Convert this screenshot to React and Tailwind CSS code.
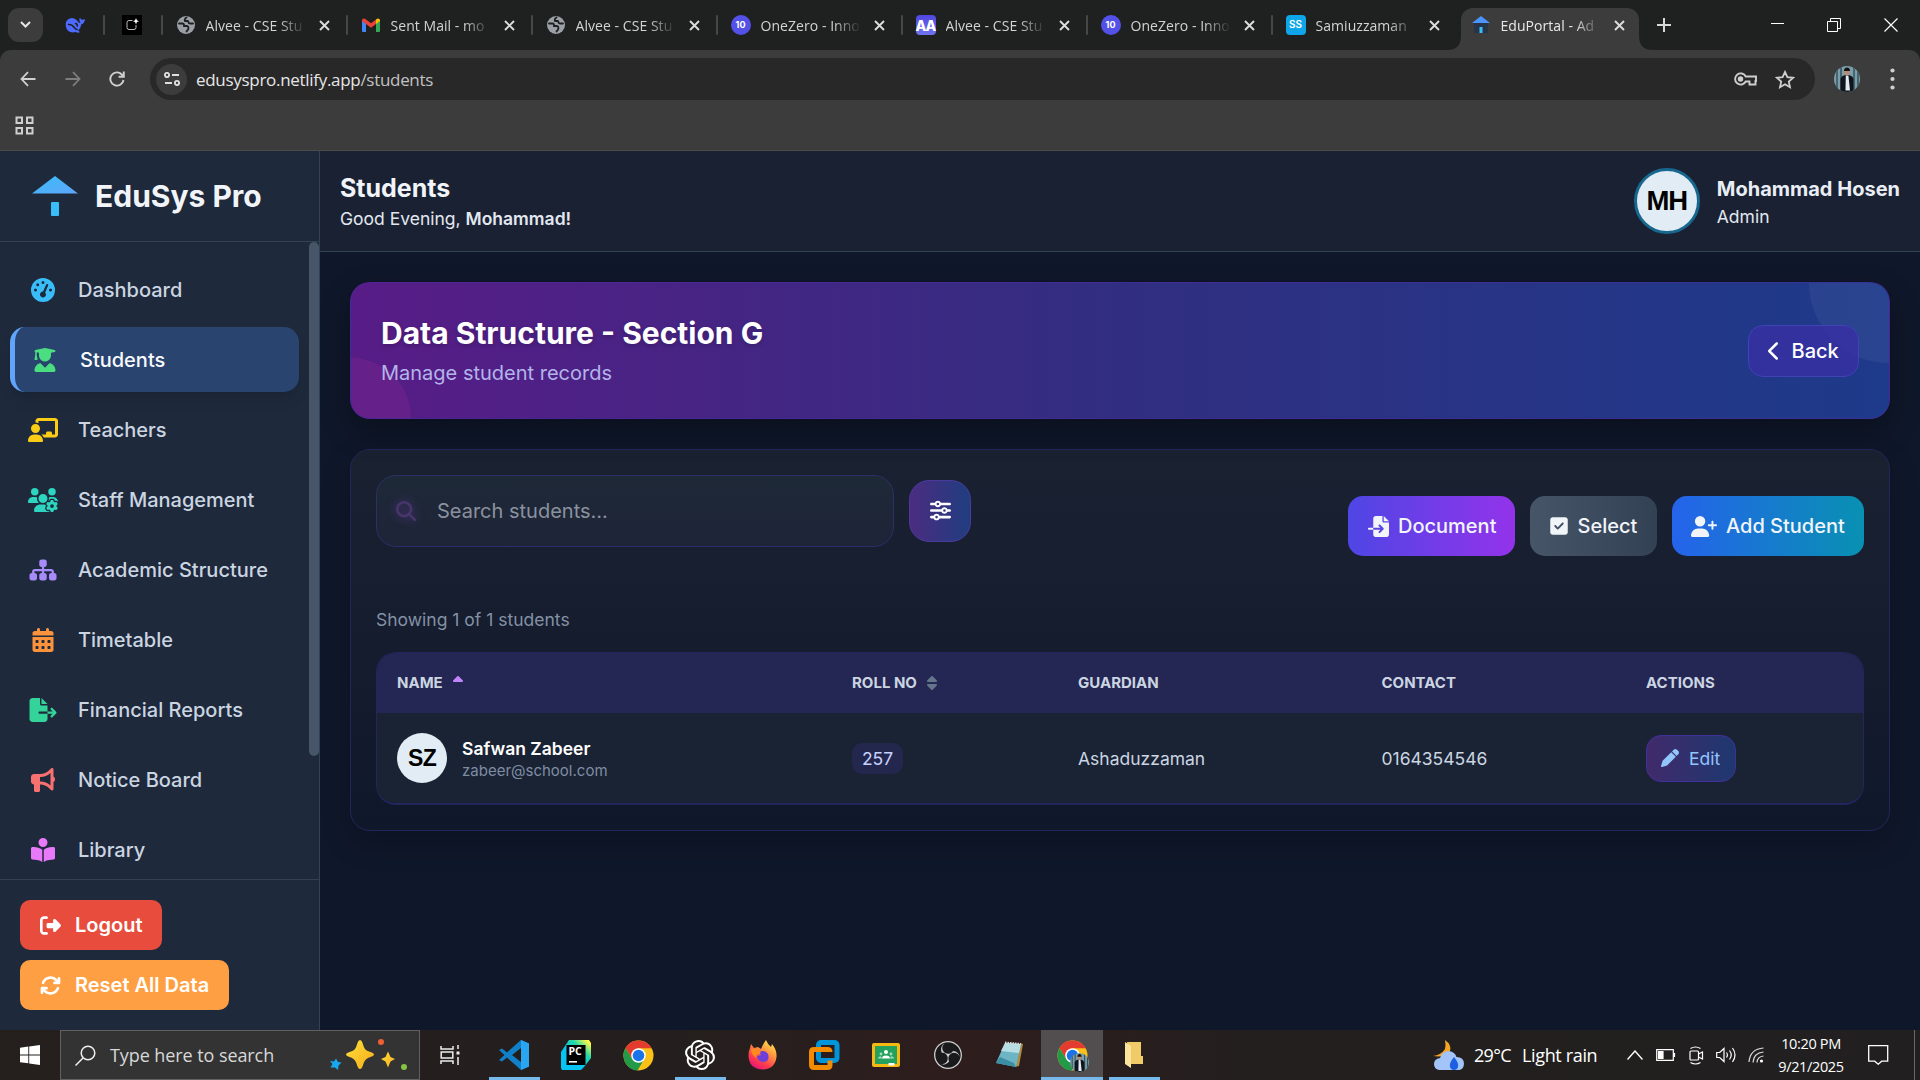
import React from "react";
import {
  FaGaugeHigh, FaUserGraduate, FaChalkboardUser, FaUsersGear, FaSitemap, FaCalendarDays,
  FaFileExport, FaBullhorn, FaBookOpenReader, FaRightFromBracket, FaArrowsRotate, FaChevronLeft,
  FaMagnifyingGlass, FaSliders, FaFileImport, FaSquareCheck, FaUserPlus, FaSort, FaSortUp, FaPen,
} from "react-icons/fa6";
import { SiOpenai, SiObsstudio } from "react-icons/si";

/* ---------- favicons ---------- */
const Globe = () => (
  <svg width="18" height="18" viewBox="0 0 18 18">
    <circle cx="9" cy="9" r="9" fill="#9aa0a6" />
    <path d="M2 7.500h3.500q1.500 0 1.500 1.500v1h3q1.500.3 1.500 2t-2 3.500M9.500 1.500Q7 3 8 5h2.500q1 0 1 1.300 0 1.200 1.500 1.200h3" stroke="#1f2020" strokeWidth="1.800" fill="none" strokeLinecap="round" />
  </svg>
);
const Gmail = () => (
  <svg width="18" height="14" viewBox="0 0 18 14">
    <path d="M0 2v11q0 1 1 1h3V5z" fill="#4285f4" />
    <path d="M18 2v11q0 1-1 1h-3V5z" fill="#34a853" />
    <path d="M14 1.500V6l4-3V2q-.6-2.400-3-1.200z" fill="#fbbc04" />
    <path d="M0 2q.6-2.400 3-1.200L9 5.200l5-3.700V6L9 9.800 0 3z" fill="#ea4335" />
  </svg>
);
const OneZero = () => (
  <div className="flex h-[20px] w-[20px] items-center justify-center rounded-full bg-[#5451e8] text-[9px] font-bold text-white">10</div>
);
const DoubleA = () => (
  <div className="flex h-[20px] w-[20px] items-center justify-center rounded-[4px] bg-[linear-gradient(#5046e0,#6f74ee)] text-[14px] font-extrabold tracking-[-1px] text-white">AA</div>
);
const DoubleS = () => (
  <div className="flex h-[20px] w-[20px] items-center justify-center rounded-[4px] bg-[#0ea5e9] pb-[1px] text-[10px] font-semibold text-white">SS</div>
);
const House = () => (
  <svg width="18" height="18" viewBox="0 0 18 18">
    <rect x="2" y="7" width="14" height="10" fill="#273347" />
    <path d="M9 0l9 7H0z" fill="#4a94fb" />
    <rect x="7.500" y="11" width="3" height="6" fill="#38bdf8" />
  </svg>
);

const tabs = [
  { icon: Globe, title: "Alvee - CSE Stu" },
  { icon: Gmail, title: "Sent Mail - mo" },
  { icon: Globe, title: "Alvee - CSE Stu" },
  { icon: OneZero, title: "OneZero - Inno" },
  { icon: DoubleA, title: "Alvee - CSE Stu" },
  { icon: OneZero, title: "OneZero - Inno" },
  { icon: DoubleS, title: "Samiuzzaman" },
];

const Cross = () => (
  <svg width="11" height="11" viewBox="0 0 11 11" stroke="#dcdddd" strokeWidth="1.900"><path d="M1 1l9 9M10 1l-9 9" /></svg>
);
const Sep = () => <div className="h-[20px] w-[2px] shrink-0 rounded bg-[#45484a]" />;

function TabBody({ Icon, title, active }) {
  return (
    <>
      <div className="flex w-[20px] shrink-0 justify-center"><Icon /></div>
      <div className={`ml-[10px] w-[98px] whitespace-nowrap font-['Open_Sans','Noto_Sans',sans-serif] text-[14px] tracking-[0.050px] [mask-image:linear-gradient(to_right,black_74%,transparent_102%)] ${active ? "text-[#e8e8e8]" : "text-[#d2d3d3]"}`}>{title}</div>
      <div className="ml-[15px]"><Cross /></div>
    </>
  );
}

function Portrait({ size }) {
  return (
    <svg width={size} height={size} viewBox="0 0 26 26">
      <defs><clipPath id={`pc${size}`}><circle cx="13" cy="13" r="13" /></clipPath></defs>
      <g clipPath={`url(#pc${size})`}>
        <rect width="26" height="26" fill="#7b9eab" />
        <path d="M3 0v26M7 0v26M20 0v26M24 0v26" stroke="#36505b" strokeWidth="1.500" />
        <path d="M6.500 26V13q1-4 6.500-4t6.500 4v13z" fill="#10151d" />
        <path d="M11.800 9.500h2.600l1.600 15h-4.500z" fill="#e4eaf2" />
        <ellipse cx="13" cy="6" rx="2.700" ry="3.600" fill="#b98b74" />
        <path d="M10 5q0-3.500 3-3.500T16 5z" fill="#17120f" />
      </g>
    </svg>
  );
}

function BrowserChrome() {
  return (
    <div className="flex h-[151px] shrink-0 flex-col border-b border-[#4b4b47] bg-[#1f2020]">
      <div className="flex h-[50px] shrink-0 items-center bg-[#1f2020]">
        <div className="ml-[8px] flex h-[34px] w-[35px] items-center justify-center rounded-[11px] bg-[#3c3c3c]">
          <svg width="11" height="8" viewBox="0 0 11 8" fill="none" stroke="#e6e6e6" strokeWidth="2"><path d="M1 1l4.500 4.500L10 1" /></svg>
        </div>
        <svg className="ml-[22px]" width="20" height="18" viewBox="0 0 20 18">
          <path d="M1 6q2-4 6.500-4 3 .3 5 3 1 2.200 3 2Q13.500 4 15 1.500q.5 2.200 2.300 2.200Q19 3.600 20 2.800q-.3 4.600-3.800 5.700-.3 3.600-3 6l1.800 1.800q-2.400.9-4.400-.3Q5 17.600 2.300 14 0 10.500 1 6z" fill="#4d6bfe" />
          <path d="M3.500 8.500q3.500-.2 5.500 2.700 1.500 2 3 2.300M10.500 7.500q2 .2 1.800 2.500" stroke="#1f2020" strokeWidth="1.500" fill="none" strokeLinecap="round" />
        </svg>
        <div className="ml-[18px]"><Sep /></div>
        <div className="ml-[17px] flex h-[20px] w-[20px] items-center justify-center bg-black">
          <svg width="14" height="14" viewBox="0 0 14 14"><path d="M7.500 2.500H4q-2 0-2 2v5q0 2 2 2h5q2 0 2-2V7" stroke="#bbb" fill="none" /><path d="M11 0l.9 2.300 2.100.9-2.100.9L11 6.500l-.9-2.400L8 3.200l2.100-.9z" fill="#fff" /></svg>
        </div>
        <div className="ml-[18.500px] flex">
          {tabs.map((t, i) => (
            <div key={i} className="flex h-[34px] w-[185px] items-center">
              <Sep />
              <div className="ml-[13px] flex items-center"><TabBody Icon={t.icon} title={t.title} /></div>
            </div>
          ))}
        </div>
        <div className="relative ml-[5px] mt-[8px] flex h-[42px] w-[178px] items-center rounded-t-[12px] bg-[#3c3c3c] pb-[8px] pl-[10px]">
          <svg className="absolute bottom-0 left-[-14px]" width="14" height="14"><path d="M14 0v14H0Q14 14 14 0z" fill="#3c3c3c" /></svg>
          <svg className="absolute bottom-0 right-[-14px]" width="14" height="14"><path d="M0 0v14h14Q0 14 0 0z" fill="#3c3c3c" /></svg>
          <TabBody Icon={House} title="EduPortal - Ad" active />
        </div>
        <svg className="ml-[18px]" width="14" height="14" viewBox="0 0 14 14" stroke="#d8d8d8" strokeWidth="2"><path d="M7 0v14M0 7h14" /></svg>
        <svg className="ml-[100px]" width="14" height="14" stroke="#fff" strokeWidth="1"><path d="M0 5.500h13" /></svg>
        <svg className="ml-[42px]" width="14" height="14" fill="none" stroke="#fff" strokeWidth="1"><path d="M.5 3.500h10v10H.5zM3.500 3.500v-3h10v10h-3" /></svg>
        <svg className="ml-[43px]" width="14" height="14" stroke="#fff" strokeWidth="1.200"><path d="M.5.500l13 13M13.500.500l-13 13" /></svg>
      </div>

      <div className="flex-1 rounded-t-[11px] bg-[#3c3c3c]">
        <div className="flex h-[58px] items-center">
          <svg className="ml-[20px]" width="16" height="16" viewBox="0 0 16 16" fill="none" stroke="#d0d0d0" strokeWidth="1.800"><path d="M15.500 8H1.500M8 1.200L1.500 8 8 14.800" /></svg>
          <svg className="ml-[29px]" width="16" height="16" viewBox="0 0 16 16" fill="none" stroke="#7d7d7d" strokeWidth="1.800"><path d="M.5 8h14M8 1.200L14.500 8 8 14.800" /></svg>
          <svg className="ml-[28px]" width="16" height="16" viewBox="0 0 16 16" fill="none" stroke="#d0d0d0" strokeWidth="1.900"><path d="M14.500 9A6.600 6.600 0 1 1 12.800 3.500L14.600 5.500M14.800.5v5.200H9.600" /></svg>
          <div className="ml-[25px] flex h-[42px] w-[1665px] items-center rounded-full bg-[#282828]">
            <div className="ml-[6px] flex h-[31px] w-[31px] items-center justify-center rounded-full bg-[#3c3c3c]">
              <svg width="16" height="14" viewBox="0 0 16 14" fill="none" stroke="#dedede" strokeWidth="1.900"><circle cx="3" cy="3" r="2.100" /><path d="M8 3h7M1 11h7" /><circle cx="13" cy="11" r="2.100" /></svg>
            </div>
            <div className="ml-[9px] mt-[1px] flex-1 whitespace-nowrap font-['Open_Sans','Noto_Sans',sans-serif] text-[17px] tracking-[-0.300px] text-[#e6e6e6]">edusyspro.netlify.app<span className="text-[#c2c2c2]">/students</span></div>
            <svg width="23" height="14" viewBox="0 0 23 14" fill="none" stroke="#cfcfcf" strokeWidth="1.900"><path d="M11.700 4.500A5.600 5.600 0 1 0 11.700 9.500H15.500V12.500H21.500V9H22V4.500z" /><circle cx="6.500" cy="7" r="1.800" fill="#cfcfcf" /></svg>
            <svg className="ml-[18px] mr-[20px]" width="20" height="19" viewBox="0 0 20 19" fill="none" stroke="#cfcfcf" strokeWidth="1.800"><path d="M10 2l2.400 5.200 5.600.6-4.200 3.800 1.200 5.600L10 14.300 5 17.200l1.200-5.600L2 7.800l5.600-.6z" /></svg>
          </div>
          <div className="ml-[19px]"><Portrait size={26} /></div>
          <svg className="ml-[30px]" width="5" height="22" fill="#d0d0d0"><circle cx="2.500" cy="2.500" r="2.100" /><circle cx="2.500" cy="11" r="2.100" /><circle cx="2.500" cy="19.500" r="2.100" /></svg>
        </div>
        <svg className="ml-[15px] mt-[8px]" width="19" height="19" fill="none" stroke="#cfcfcf" strokeWidth="2"><path d="M1.500 1.500h5.500v5.500h-5.500zM12 1.500h5.500v5.500H12zM1.500 12h5.500v5.500h-5.500zM12 12h5.500v5.500H12z" /></svg>
      </div>
    </div>
  );
}

/* ---------- sidebar ---------- */
const nav = [
  { label: "Dashboard", Icon: FaGaugeHigh, color: "text-[#38bdf8]" },
  { label: "Students", Icon: FaUserGraduate, color: "text-[#4ade80]", active: true },
  { label: "Teachers", Icon: FaChalkboardUser, color: "text-[#facc15]" },
  { label: "Staff Management", Icon: FaUsersGear, color: "text-[#2dd4bf]" },
  { label: "Academic Structure", Icon: FaSitemap, color: "text-[#a78bfa]" },
  { label: "Timetable", Icon: FaCalendarDays, color: "text-[#fb923c]" },
  { label: "Financial Reports", Icon: FaFileExport, color: "text-[#34d399]" },
  { label: "Notice Board", Icon: FaBullhorn, color: "text-[#f87171]" },
  { label: "Library", Icon: FaBookOpenReader, color: "text-[#e879f9]" },
];

function Sidebar() {
  return (
    <aside className="flex w-[320px] shrink-0 flex-col border-r border-[#334155] bg-[#1e293b]">
      <div className="flex h-[91px] shrink-0 items-center border-b border-[#334155] pl-[32px]">
        <svg width="46" height="42" viewBox="0 0 46 42">
          <defs><linearGradient id="roof" x1="0" y1="0" x2="1" y2="1"><stop offset="0" stopColor="#38bdf8" /><stop offset="1" stopColor="#60a5fa" /></linearGradient></defs>
          <path d="M23 1l23 17.500H0z" fill="url(#roof)" />
          <rect x="19" y="27" width="8" height="14" rx="1" fill="#38bdf8" />
        </svg>
        <span className="ml-[17px] whitespace-nowrap text-[30px] font-bold leading-none text-[#f1f5f9]">EduSys Pro</span>
      </div>
      <div className="flex min-h-0 flex-1">
        <nav className="flex w-[309px] flex-col gap-[5px] overflow-hidden px-[10px] pt-[15px]">
          {nav.map(({ label, Icon, color, active }) => (
            <div key={label} className={`flex h-[65px] shrink-0 items-center rounded-[15px] text-[20px] font-medium ${active ? "border-l-[5px] border-[#60a5fa] bg-[#29446f] pl-[15px] text-[#f8fafc] shadow-lg" : "pl-[18px] text-[#cbd5e1]"}`}>
              <Icon className={`h-[24px] w-[30px] shrink-0 ${color}`} />
              <span className="ml-[20px] whitespace-nowrap">{label}</span>
            </div>
          ))}
        </nav>
        <div className="h-[514px] w-[10px] rounded-full bg-[#475569]" />
      </div>
      <div className="flex h-[151px] shrink-0 flex-col items-start gap-[10px] border-t border-[#334155] pl-[20px] pt-[20px]">
        <button className="flex h-[50px] w-[142px] items-center rounded-[10px] bg-[#e74c3c] pl-[20px] text-[20px] font-semibold text-white"><FaRightFromBracket className="mr-[14px] text-[21px]" />Logout</button>
        <button className="flex h-[50px] w-[209px] items-center whitespace-nowrap rounded-[10px] bg-[#ff9f43] pl-[20px] text-[20px] font-semibold text-white"><FaArrowsRotate className="mr-[14px] text-[21px]" />Reset All Data</button>
      </div>
    </aside>
  );
}

/* ---------- main ---------- */
const Th = ({ children, w }) => <div className={`flex items-center text-[15px] font-bold text-[#cbd5e1] ${w}`}>{children}</div>;

function Main() {
  return (
    <main className="flex flex-1 flex-col bg-[#0f172a]">
      <header className="flex h-[101px] shrink-0 items-center justify-between border-b border-[#334155] bg-[#1a2133] px-[20px]">
        <div>
          <h1 className="text-[25px] font-bold leading-[35px] text-[#f1f5f9]">Students</h1>
          <p className="text-[17.500px] leading-[26px] text-[#e2e8f0]">Good Evening, <span className="font-semibold">Mohammad!</span></p>
        </div>
        <div className="flex items-center">
          <div className="flex h-[66px] w-[66px] items-center justify-center rounded-full border-[3px] border-[#17678f] bg-[#e2ecf5] font-['Liberation_Sans',Arial,sans-serif] text-[27.500px] font-bold tracking-[-1px] text-black">MH</div>
          <div className="ml-[17px] pt-[2px]">
            <p className="text-[20px] font-bold leading-[28px] text-[#e9eef5]">Mohammad Hosen</p>
            <p className="text-[17.500px] leading-[27px] text-[#e2e8f0]">Admin</p>
          </div>
        </div>
      </header>

      <div className="flex flex-col gap-[30px] px-[30px] pt-[30px]">
        <section className="relative flex h-[137px] items-center justify-between overflow-hidden rounded-[20px] border border-[#4a2ba0]/60 bg-[linear-gradient(to_right,#581c87,#312e81,#1e3a8a)] px-[30px] shadow-[0_12px_30px_rgba(0,0,0,0.300)]">
          <div className="absolute -right-[80px] -top-[80px] h-[160px] w-[160px] rounded-full bg-white/5" />
          <div className="absolute -bottom-[60px] -left-[60px] h-[120px] w-[120px] rounded-full bg-[#ec4899]/10" />
          <div className="relative">
            <h2 className="text-[30px] font-bold leading-[40px] text-white [text-shadow:0_2px_4px_rgba(0,0,0,0.200)]">Data Structure - Section G</h2>
            <p className="mt-[5px] text-[20px] leading-[30px] text-[#b3b4ea]">Manage student records</p>
          </div>
          <button className="relative flex h-[52px] w-[111px] items-center rounded-[15px] border border-[#4142b4] bg-[#3730a3]/80 pl-[19px] text-[20px] font-medium text-white"><FaChevronLeft className="mr-[11px] h-[20px] w-[12.500px] shrink-0" />Back</button>
        </section>

        <section className="flex h-[382px] flex-col rounded-[20px] border border-[#23265a] bg-[linear-gradient(#1a2232,#0f172a)] px-[25px] shadow-[0_12px_30px_rgba(0,0,0,0.200)]">
          <div className="mt-[25px] flex h-[120px] items-start">
            <div className="flex h-[72px] w-[518px] items-center rounded-[20px] border border-[#2b2f68] bg-[linear-gradient(#1e2937,#1e2438)] pl-[19px]">
              <FaMagnifyingGlass className="text-[20px] text-[#46366b] drop-shadow-[0_0_5px_rgba(120,60,180,0.600)]" />
              <span className="ml-[21px] text-[20px] text-[#8b929f]">Search students...</span>
            </div>
            <button className="ml-[15px] mt-[5px] flex h-[62px] w-[62px] items-center justify-center rounded-[20px] border border-[#4a3a9e] bg-[linear-gradient(to_right,#4b2c80,#203d80)] pb-[2px] text-[21px] text-white"><FaSliders /></button>
            <div className="ml-auto mt-[21px] flex gap-[15px] text-[20px] font-medium text-[#f1f5f9]">
              <button className="flex h-[60px] w-[167px] items-center rounded-[15px] bg-[linear-gradient(to_right,#4f46e5,#9333ea)] pl-[20px]"><FaFileImport className="mr-[9px] text-[21px]" />Document</button>
              <button className="flex h-[60px] w-[127px] items-center rounded-[15px] bg-[linear-gradient(to_right,#475569,#334155)] pl-[19px]"><FaSquareCheck className="mr-[8.500px] text-[20px]" />Select</button>
              <button className="flex h-[60px] w-[192px] items-center whitespace-nowrap rounded-[15px] bg-[linear-gradient(to_right,#2563eb,#0891b2)] pl-[19px]"><FaUserPlus className="mr-[9px] h-[21px] w-[26px] shrink-0" />Add Student</button>
            </div>
          </div>
          <p className="mt-[12px] text-[17.500px] leading-[26px] text-[#8491a5]">Showing 1 of 1 students</p>
          <div className="mt-[19px] flex h-[153px] flex-col overflow-hidden rounded-[20px] border border-b-2 border-[#23265e]">
            <div className="flex h-[60px] shrink-0 bg-[#242653] pl-[20px]">
              <Th w="w-[455px]">NAME<FaSortUp className="ml-[7px] text-[16px] text-[#c084fc]" /></Th>
              <Th w="w-[226px]">ROLL NO<FaSort className="ml-[7px] text-[16px] text-[#64748b]" /></Th>
              <Th w="w-[303.500px]">GUARDIAN</Th>
              <Th w="w-[264.500px]">CONTACT</Th>
              <Th w="w-[120px]">ACTIONS</Th>
            </div>
            <div className="flex flex-1 items-center bg-[#1a2334] pl-[20px] text-[17.500px] text-[#cbd5e1]">
              <div className="flex w-[455px] items-center">
                <div className="flex h-[50px] w-[50px] items-center justify-center rounded-full bg-[#e2ecf5] font-['Liberation_Sans',Arial,sans-serif] text-[23px] font-bold tracking-[-0.800px] text-black">SZ</div>
                <div className="ml-[15px] pt-[2px]">
                  <p className="text-[17.500px] font-semibold leading-[24px] text-white">Safwan Zabeer</p>
                  <p className="text-[15px] leading-[20px] text-[#7f8da3]">zabeer@school.com</p>
                </div>
              </div>
              <div className="flex w-[226px] pt-[1px]"><span className="flex h-[31px] w-[51px] items-center justify-center rounded-[10px] bg-[#23274d] pt-[1px] text-[#c7d2fe]">257</span></div>
              <div className="w-[303.500px] pt-[2px]">Ashaduzzaman</div>
              <div className="w-[264.500px] pt-[2px]">0164354546</div>
              <button className="flex h-[47px] w-[90px] items-center rounded-[15px] border border-[#42309a] bg-[linear-gradient(to_right,#412a6c,#1e386f)] pl-[14px] pt-[2px] text-[#93c5fd]"><FaPen className="mb-[2px] mr-[10px] text-[18px]" />Edit</button>
            </div>
          </div>
        </section>
      </div>
    </main>
  );
}

/* ---------- taskbar ---------- */
const VSCode = () => (
  <svg width="30" height="30" viewBox="0 0 30 30">
    <path d="M22 0l8 3.500v23L22 30 8 17.500l-5 4L0 20l5.500-5L0 10l3-1.500 5 4z" fill="#1180c8" />
    <path d="M22 8v14l-9-7z" fill="#211e1e" /><path d="M22 0l8 3.500v23L22 30z" fill="#2aa5f2" />
  </svg>
);
const PyCharm = () => (
  <svg width="30" height="30" viewBox="0 0 30 30">
    <defs><linearGradient id="py" x1="0" y1="1" x2="1" y2="0"><stop offset=".4" stopColor="#07c3f2" /><stop offset=".68" stopColor="#21d7a9" /><stop offset=".92" stopColor="#fcf84a" /></linearGradient></defs>
    <path d="M8 0h20l2 3v15l-7 9-3 3H1l-1-2V12z" fill="url(#py)" /><rect x="5.500" y="5" width="19" height="20" fill="#000" />
    <text x="7.500" y="15" fill="#fff" fontSize="10.500" fontWeight="700" fontFamily="Open Sans, sans-serif">PC</text><rect x="8" y="21" width="8" height="1.600" fill="#fff" />
  </svg>
);
const Chrome = () => (
  <svg width="31" height="31" viewBox="0 0 32 32">
    <circle cx="16" cy="16" r="15.500" fill="#fbc116" />
    <path d="M2.600 8.200A15.500 15.500 0 0 1 29.500 8.500H16q-5 .3-6.500 11.200z" fill="#e33b2e" />
    <path d="M2.600 8.200A15.500 15.500 0 0 0 15 31.500l7-12q-7 4.500-12.500 0z" fill="#229a48" />
    <circle cx="16" cy="16" r="7.500" fill="#fff" /><circle cx="16" cy="16" r="6" fill="#1a73e8" />
  </svg>
);
const Firefox = () => (
  <svg width="29" height="30" viewBox="0 0 29 30">
    <defs><linearGradient id="ff" x1=".9" y1="0" x2=".3" y2="1"><stop offset="0" stopColor="#fff44f" /><stop offset=".4" stopColor="#ff9640" /><stop offset=".75" stopColor="#ff3b4e" /><stop offset="1" stopColor="#e2157a" /></linearGradient></defs>
    <path d="M2 8l1-4 3 4 4-1 3 2Q15 4 18 0q2 5 5 7l1-3q5 6 4.500 13Q27 29 15 29.500 1 29 .5 16 .5 11 2 8z" fill="url(#ff)" />
    <path d="M11 12q6-3 9 2 2 7-4 8-6 0-7-6l4-1z" fill="#6b3fd8" /><path d="M3 9q6-1 9 2 2 2-2 3-2 1-2 4-5-4-5-9z" fill="#ff8a1f" />
  </svg>
);
const VMware = () => (
  <svg width="31" height="30" viewBox="0 0 31 30" fill="none" strokeWidth="5">
    <rect x="9.500" y="2.500" width="18.500" height="18" rx="2.500" stroke="#0095d9" /><path d="M21 20.500v4.500q0 2.500-2.500 2.500H5q-2.500 0-2.500-2.500V12q0-2.500 2.500-2.500h13.500q2.500 0 2.500 2.500" stroke="#f38b00" />
  </svg>
);
const Classroom = () => (
  <svg width="28" height="24" viewBox="0 0 28 24"><rect width="28" height="24" rx="2" fill="#f5b912" /><rect x="3" y="3" width="22" height="18" fill="#23a15d" /><circle cx="14" cy="9" r="2" fill="#fff" /><circle cx="9" cy="11" r="1.400" fill="#a5dbbd" /><circle cx="19" cy="11" r="1.400" fill="#a5dbbd" /><path d="M10 15.500q0-3 4-3t4 3z" fill="#fff" /><path d="M6 15.500q0-2 3-2.300l1 2.300zM22 15.500q0-2-3-2.300l-1 2.300z" fill="#a5dbbd" /><rect x="16.500" y="20" width="6" height="2.500" fill="#fff" /></svg>
);
const Notepad = () => (
  <svg width="28" height="28" viewBox="0 0 28 28"><path d="M24 2l3 1-4 22-4 1z" fill="#b08a3e" /><path d="M9 2l16 1-5 23L0 22z" fill="#6db5c4" /><path d="M9 2l16 1-2 9L5 10z" fill="#b7dde5" /><path d="M0 22l4-6 14 6 2 4z" fill="#3b8ea3" /><path d="M9 1.500l16 1.500" stroke="#ddd" strokeWidth="2" strokeDasharray="1.500 1" /></svg>
);
const Folder = () => (
  <svg width="18" height="26" viewBox="0 0 18 26"><path d="M2 0h14v14h2v8H4z" fill="#f0cb67" /><path d="M0 0l6 4v22l-6-4z" fill="#fce49c" /></svg>
);
const Obs = () => (
  <div className="rounded-full bg-[#1a191c]"><SiObsstudio size={28} color="#cfcfcf" /></div>
);

const apps = [
  { el: <VSCode />, line: true }, { el: <PyCharm /> }, { el: <Chrome /> },
  { el: <SiOpenai size={30} color="#fff" />, line: true }, { el: <Firefox /> }, { el: <VMware /> }, { el: <Classroom /> },
  { el: <Obs /> }, { el: <Notepad /> },
  { el: <div className="relative"><Chrome /><div className="absolute left-[13px] top-[13px]"><Portrait size={19} /></div></div>, active: true },
  { el: <Folder />, line: true },
];

function Taskbar() {
  const seg = "font-['Open_Sans','Noto_Sans',sans-serif]";
  return (
    <div className="flex h-[50px] shrink-0 items-center bg-[linear-gradient(to_right,#251f1e,#241f1e_35%,#2e1d1d_50%,#231f1e_65%,#211f20)] text-white">
      <svg className="ml-[20px]" width="20" height="20" viewBox="0 0 20 20" fill="#fff"><path d="M0 2.800l8.300-1.200v7.900H0zM9.200 1.500L20 0v9.500H9.200zM0 10.400h8.300v7.900L0 17.200zM9.200 10.400H20V20L9.200 18.500z" /></svg>
      <div className="ml-[20px] flex h-full w-[360px] items-center border border-[#606060] bg-[#333]">
        <svg className="ml-[14px]" width="21" height="21" viewBox="0 0 21 21" fill="none" stroke="#f0f0f0" strokeWidth="1.500"><circle cx="13" cy="8" r="6.800" /><path d="M8 13l-7.500 7.500" /></svg>
        <span className={`ml-[14px] whitespace-nowrap text-[18px] tracking-[-0.080px] text-[#d8d8d8] ${seg}`}>Type here to search</span>
        <svg className="ml-auto mr-[11px]" width="78" height="34" viewBox="0 0 78 34">
          <defs><linearGradient id="st" x1="0" y1="0" x2="1" y2="1"><stop offset="0" stopColor="#ffe03a" /><stop offset="1" stopColor="#f7ac1c" /></linearGradient></defs>
          <path d="M30 2q2 0 3.500 6Q35 12.500 39 13.500q5 1.500 5 3t-5 3q-4 1.500-5.500 6Q32 31 30 31t-3.500-5.500q-1.500-4.500-5.500-6-5-1.500-5-3t5-3q4-1 5.500-5.500Q28 2 30 2z" fill="url(#st)" />
          <path d="M58 13.500l2.500 5.500 4.500 2-4.500 2.500L58 29.500l-2.500-6L51 21l4.500-2z" fill="url(#st)" />
          <path d="M6 20.500l2 3.500 3.500.5-3 3-.5 4.500-3-2.500-4.500 0 2-3.500L0 23l4 .5z" fill="#17a9f0" />
          <circle cx="51" cy="4" r="3" fill="#ee5f34" /><circle cx="74" cy="29" r="3" fill="#84c441" />
        </svg>
      </div>
      <div className="flex w-[63px] justify-center pr-[2px]">
        <svg width="21" height="20" fill="none" stroke="#eee" strokeWidth="1.500"><path d="M1 1v3h12V1M1.200 7h11.600v6H1.200zM1 19v-3h12v3M18 0v4M18 12v8" /><path d="M16.500 8h3" strokeWidth="3" /></svg>
      </div>
      {apps.map((a, i) => (
        <div key={i} className={`relative flex h-[50px] w-[62px] items-center justify-center ${a.active ? "bg-[#524d4e]" : ""}`}>
          {a.el}
          {(a.line || a.active) && <div className={`absolute bottom-0 h-[3px] bg-[#76b9ed] ${a.active ? "w-full" : "w-[51px]"}`} />}
        </div>
      ))}
      <svg className="ml-[268px]" width="32" height="31" viewBox="0 0 32 31">
        <path d="M12 0q7 5 5 11-4 7-17 5Q8 15 12 9q1-4 0-9z" fill="#f5a623" />
        <path d="M6 30q-5-1-5-6t6-6q2-7 9-7 6 1 7.500 6Q31 17 31 24q-.5 6-6 6z" fill="#a3c4f8" />
        <path d="M21 17q5 6 4 10-1 3-4 3t-4-3q-1-4 4-10z" fill="#1c5fe0" />
      </svg>
      <span className={`ml-[9px] w-[48px] text-[18px] tracking-[-0.700px] ${seg}`}>29°C</span>
      <span className={`w-[105px] whitespace-nowrap text-[18px] tracking-[-0.350px] ${seg}`}>Light rain</span>
      <svg width="16" height="10" fill="none" stroke="#fff" strokeWidth="1.400"><path d="M.5 9.500L8 1l7.500 8.500" /></svg>
      <svg className="ml-[13px]" width="20" height="12" fill="none" stroke="#fff" strokeWidth="1.200"><path d="M.7.700h16.600v10.600H.7zM18.500 4v4" /><path d="M2.500 2.500H7v7H2.500z" fill="#fff" /></svg>
      <svg className="ml-[13px]" width="15" height="19" fill="none" stroke="#fff" strokeWidth="1.200"><rect x="1" y="5" width="8.500" height="9" rx="1" /><path d="M9.500 8l4-2v7l-4-2M1.500 2.500q5-3 10 0M1.500 16.500q5 3 10 0" /></svg>
      <svg className="ml-[12px]" width="21" height="16" fill="none" stroke="#fff" strokeWidth="1.200"><path d="M.7 5.500h3L8 1.500v13l-4.300-4h-3zM10.500 5.500q1.800 2.500 0 5M13.500 3.500q3.500 4.500 0 9M16.500 1q5 7 0 14" /></svg>
      <svg className="ml-[11px]" width="16" height="16" fill="none" stroke="#ddd" strokeWidth="1.200"><path d="M1 15Q2 2 15.500 1M5 15.500Q5.500 6 15.500 5M9 15.500q.5-6 6.500-6.500" /><circle cx="13.500" cy="14" r="1.600" fill="#fff" stroke="none" /></svg>
      <div className={`ml-[11px] w-[72px] whitespace-nowrap text-center text-[14.500px] leading-[23px] tracking-[-0.350px] ${seg}`}>10:20 PM<br />9/21/2025</div>
      <svg className="ml-[21px]" width="21" height="20" fill="none" stroke="#fff" strokeWidth="1.300"><path d="M.7.700h19v15.500h-6l-3.500 3-3.500-3h-6z" /></svg>
      <div className="ml-auto mr-[5px] h-full w-px bg-[#6a6868]" />
    </div>
  );
}

export default function App() {
  return (
    <div className="flex h-[1080px] w-[1920px] flex-col overflow-hidden bg-[#0f172a] font-['Inter',sans-serif]">
      <BrowserChrome />
      <div className="flex min-h-0 flex-1">
        <Sidebar />
        <Main />
      </div>
      <Taskbar />
    </div>
  );
}
